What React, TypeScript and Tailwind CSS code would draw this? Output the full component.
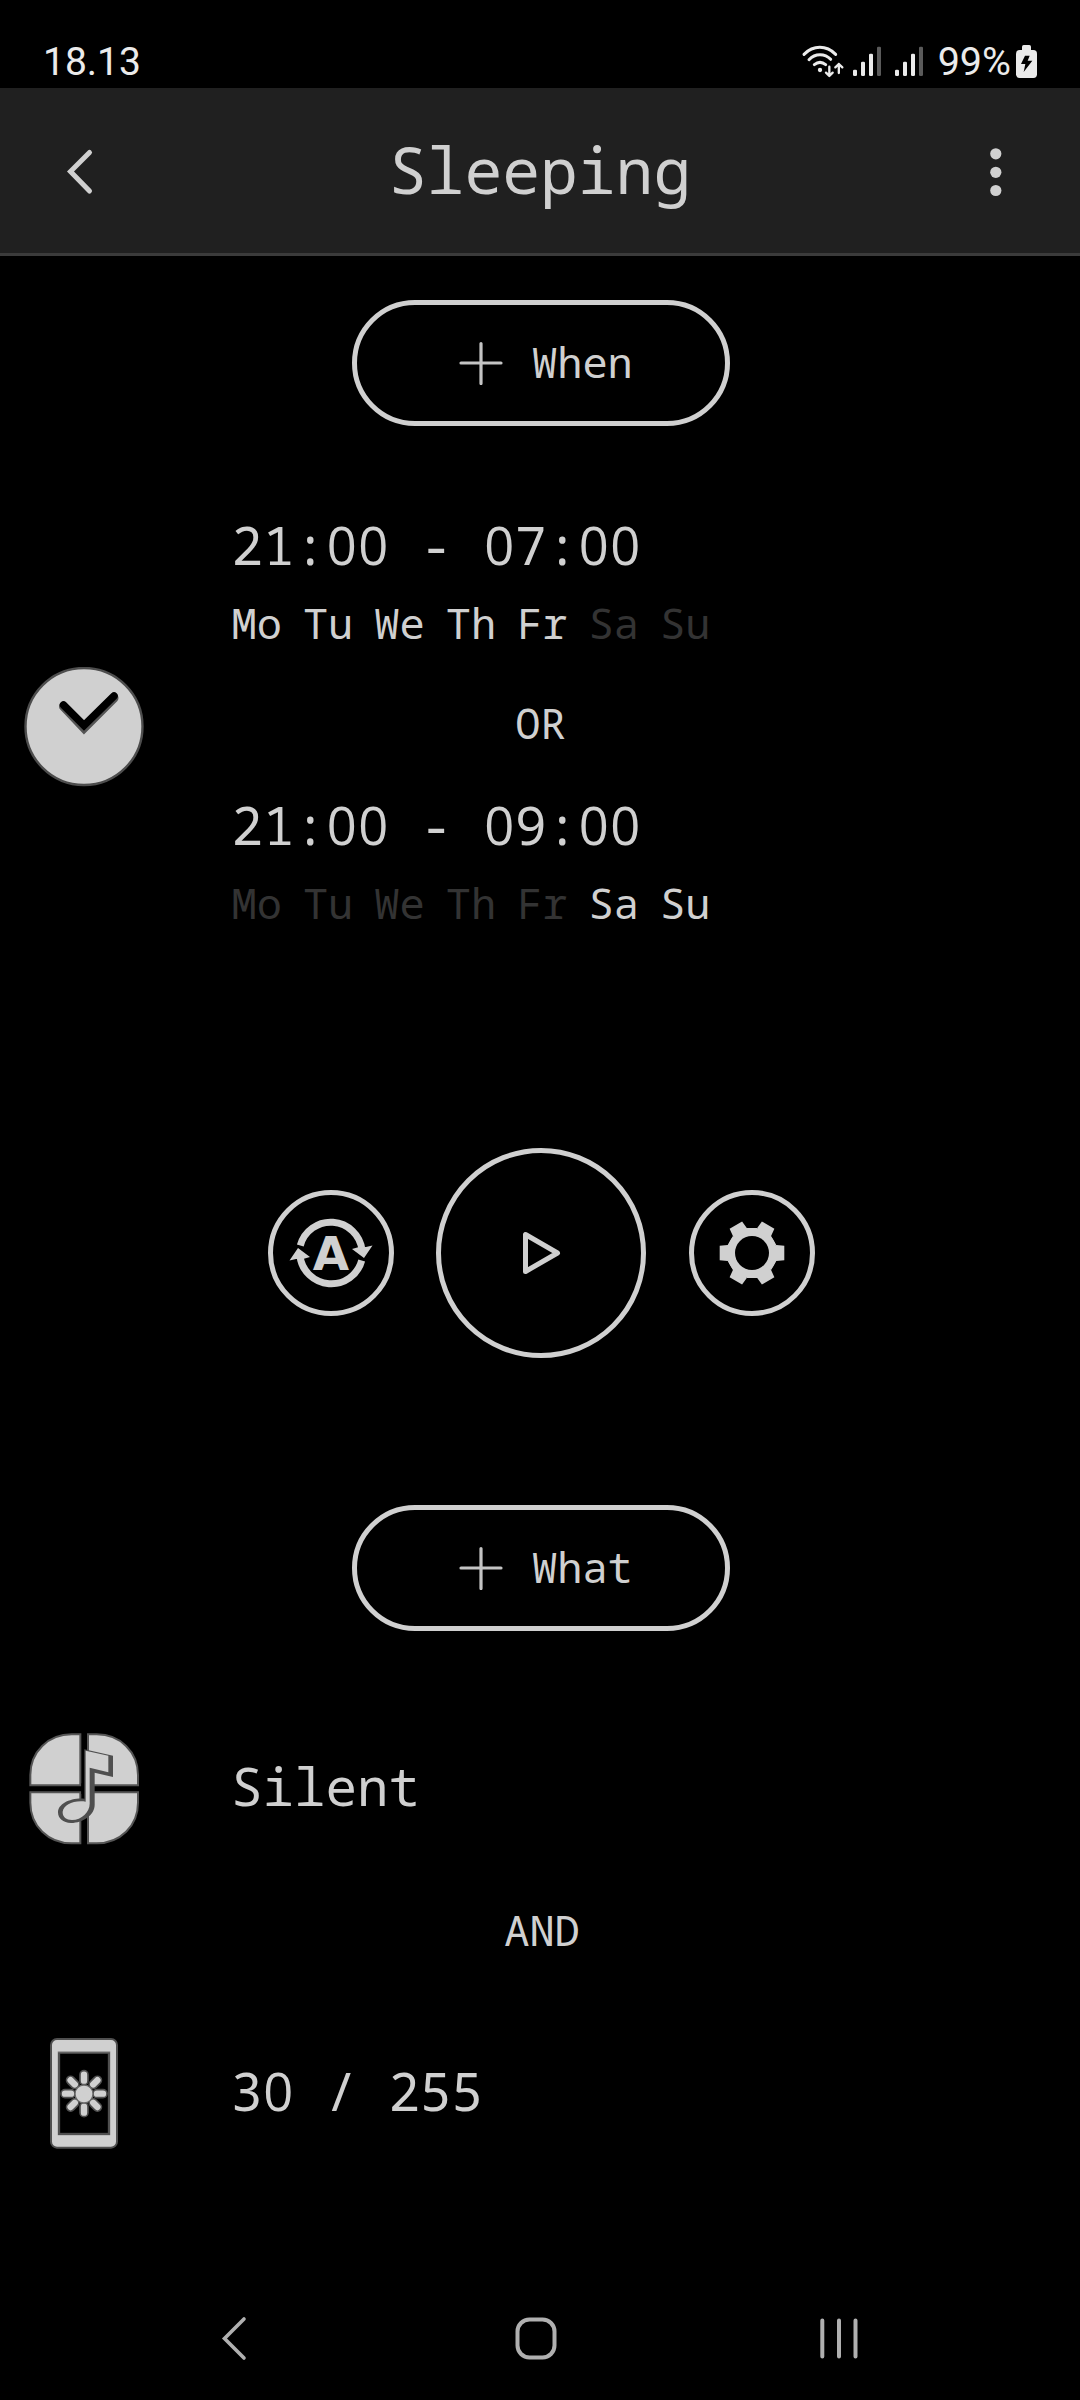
import React from 'react';

const DAYS = ['Mo', 'Tu', 'We', 'Th', 'Fr', 'Sa', 'Su'];

const schedules = [
  { time: '21:00 - 07:00', active: ['Mo', 'Tu', 'We', 'Th', 'Fr'] },
  { time: '21:00 - 09:00', active: ['Sa', 'Su'] },
];

// Zeros are set without the slash, on the same 0.6em advance
function Digits({ value }: { value: string }) {
  return (
    <>
      {value.split(/(0+)/).map((part, i) =>
        part.startsWith('0') ? (
          <span key={i} className="ml-[0.014em] -mr-[0.014em] font-['Open_Sans'] tracking-[0.028em]">
            {part}
          </span>
        ) : (
          part
        )
      )}
    </>
  );
}

function WifiIcon() {
  return (
    <svg className="h-[44px] w-[48px]" viewBox="60 60 144 132" fill="none" stroke="#ebebeb" strokeLinecap="round" strokeLinejoin="round">
      <path d="M72 103 Q93 82 119.500 82 Q146 82 167 103" strokeWidth="9" />
      <path d="M87 119 Q101 104 120 104 Q139 104 152 118" strokeWidth="9" />
      <path d="M103 134 Q120 120 137 134" strokeWidth="9" />
      <circle cx="120" cy="150" r="6.500" fill="#ebebeb" stroke="none" />
      <path d="M148 140 V167 M138 158 L148 168 L158 158" strokeWidth="7" />
      <path d="M176.500 159 V132 M166 142 L176.500 132 L187 142" strokeWidth="7" />
    </svg>
  );
}

function SignalIcon() {
  return (
    <svg className="h-[44px] w-[42px]" viewBox="204 60 126 132" fill="#ebebeb">
      <rect x="219" y="149" width="12" height="19" rx="4" />
      <rect x="243" y="125" width="12" height="43" rx="4" />
      <rect x="267" y="101" width="12" height="67" rx="4" />
      <rect x="291" y="80" width="12" height="88" rx="4" fill="#5a5a5a" />
    </svg>
  );
}

function BatteryIcon() {
  return (
    <svg className="ml-[3px] h-[44px] w-[26px]" viewBox="702 60 78 132" fill="#ebebeb">
      <rect x="726" y="75" width="27" height="24" rx="5" />
      <rect x="708" y="90" width="63" height="84" rx="11" />
      <path d="M735 107 H749 L743 122 H757 L731 156 L736 132 H723 Z" fill="#000" />
    </svg>
  );
}

function StatusBar() {
  return (
    <div className="flex h-[88px] items-center justify-between pl-[43px] pr-10 pt-[35px] font-['Roboto'] text-[39.5px] leading-[44px] text-[#ebebeb]">
      <span className="text-[39px]">18.13</span>
      <div className="flex items-center">
        <WifiIcon />
        <SignalIcon />
        <SignalIcon />
        <span className="ml-1.5">99%</span>
        <BatteryIcon />
      </div>
    </div>
  );
}

function Header() {
  return (
    <header className="flex h-[168px] items-center justify-between border-b-[3px] border-[#3b3b3b] bg-[#202020] pl-[59px] pr-[63px]">
      <svg className="h-[50px] w-[42px]" viewBox="0 0 42 50" fill="none" stroke="#d0d0d0" strokeWidth="5" strokeLinecap="round">
        <path d="M30.500 6.500 L11.500 25.500 L30.500 45" />
      </svg>
      <h1 className="pb-px pl-[4px] text-[63px] leading-[80px]">Sleeping</h1>
      <svg className="h-[60px] w-[42px]" viewBox="0 0 42 60" fill="#d0d0d0">
        <circle cx="20.800" cy="12.800" r="5.600" />
        <circle cx="20.800" cy="31.300" r="5.600" />
        <circle cx="20.800" cy="49.500" r="5.600" />
      </svg>
    </header>
  );
}

function AddButton({ label }: { label: string }) {
  return (
    <button className="ml-[352px] flex h-[126px] w-[378px] items-center rounded-full border-[5px] border-[#d0d0d0] pl-[102px]">
      <svg className="h-[44px] w-[44px]" viewBox="0 0 44 44" stroke="#c4c4c4" strokeWidth="3.200" strokeLinecap="round">
        <path d="M22 2.500 V42.500 M2 22 H42" />
      </svg>
      <span className="ml-[29px] pb-0.5 text-[42px] leading-[56px]">{label}</span>
    </button>
  );
}

function ClockIcon() {
  return (
    <svg className="ml-[24px] h-[120px] w-[120px]" viewBox="0 0 120 120" fill="none">
      <circle cx="60" cy="59.500" r="58.500" fill="#d0d0d0" stroke="#4d4d4d" strokeWidth="2.400" />
      <path d="M39.500 39.500 L60 61 L90 31" stroke="#555" strokeWidth="9" strokeLinecap="round" />
      <path d="M39.500 38 L60 58.500 L90 29" stroke="#000" strokeWidth="7.500" strokeLinecap="round" />
    </svg>
  );
}

function SoundIcon() {
  return (
    <svg className="ml-5 h-[130px] w-[130px]" viewBox="0 0 390 390" fill="#d0d0d0" stroke="#555" strokeWidth="6">
      <path d="M181 43 H155 C85 43 31 95 31 165 V196 H181 Z" />
      <path d="M204 43 H230 C300 43 354 95 354 165 V196 H204 Z" />
      <path d="M181 217 H31 V248 C31 318 85 370 155 370 H181 Z" />
      <path d="M204 217 H354 V248 C354 318 300 370 230 370 H204 Z" />
      {/* gap between the tiles under the note */}
      <rect x="184" y="190" width="17" height="32" fill="#000" stroke="none" />
      <path
        d="M193 88 L279 107 V171 L224 158 V255 C224 284 190 309 153 309 C129 309 114 295 114 277 C114 252 150 233 193 236 Z"
        fill="#4f4f4f"
        stroke="none"
      />
      <path
        d="M197 92 L265 107 V157 L209 143 V247 C211 275 186 299 156 300 C138 300 127 291 128 275 C131 255 160 240 197 245 Z"
        stroke="none"
      />
    </svg>
  );
}

const PETALS = [0, 45, 90, 135, 180, 225, 270, 315];

function BrightnessIcon() {
  return (
    <svg className="ml-[30px] h-[140px] w-[110px]" viewBox="0 0 330 420">
      <rect x="63" y="57" width="198" height="326" rx="18" fill="#d0d0d0" stroke="#4f4f4f" strokeWidth="6" />
      <rect x="87" y="98" width="150" height="244" fill="#000" stroke="#4f4f4f" strokeWidth="7" />
      <path d="M84 95 H240" stroke="#a0a0a0" strokeWidth="4" />
      {PETALS.map((a) => (
        <rect
          key={a}
          x="150"
          y="152"
          width="24"
          height="42"
          rx="12"
          fill="#d0d0d0"
          stroke="#4f4f4f"
          strokeWidth="5"
          transform={`rotate(${a} 162 221)`}
        />
      ))}
      <circle cx="162" cy="222" r="27" fill="#d0d0d0" stroke="#6a6a6a" strokeWidth="4" />
    </svg>
  );
}

function AutoIcon() {
  return (
    <svg className="h-[90px] w-[90px]" viewBox="-45 -45 90 90" fill="#d0d0d0">
      <g fill="none" stroke="#d0d0d0" strokeWidth="7">
        <path d="M-30.700 -7.500 A31.500 31.500 0 0 1 31 -3" />
        <path d="M30.700 7.500 A31.500 31.500 0 0 1 -31 3" />
      </g>
      <path d="M21 -4 L28 -6 H35 L41.500 -7.500 L33 5 Z" />
      <path d="M-21 4 L-28 6 H-35 L-41.500 7.500 L-33 -5 Z" />
      <text x="0" y="17" textAnchor="middle" className="font-['DejaVu_Sans'] text-[47px] font-bold">
        A
      </text>
    </svg>
  );
}

function PlayIcon() {
  return (
    <svg className="h-[64px] w-[64px]" viewBox="-32 -32 64 64" fill="none" stroke="#d0d0d0" strokeWidth="5" strokeLinejoin="round">
      <path d="M-15.500 -18.500 V18.500 L16.500 0 Z" />
    </svg>
  );
}

function GearIcon() {
  const teeth = [0, 60, 120, 180, 240, 300];
  return (
    <svg className="h-[90px] w-[90px]" viewBox="-45 -45 90 90">
      <circle r="21" fill="none" stroke="#d0d0d0" strokeWidth="8" />
      {teeth.map((a) => (
        <path
          key={a}
          d="M17 -9.800 L22.300 -6.700 L24.300 -8 L32.300 -7.200 V7.200 L24.300 8 L19.100 17 L12 12 Z"
          fill="#d0d0d0"
          transform={`rotate(${a})`}
        />
      ))}
      <circle r="17" fill="#000" />
    </svg>
  );
}

function NavBar() {
  return (
    <nav className="flex h-[110px] items-center pb-[15px]">
      <svg className="ml-[214px] h-[48px] w-[40px]" viewBox="0 0 40 48" fill="none" stroke="#b0b0b0" strokeWidth="3.600" strokeLinecap="round">
        <path d="M30 5 L10.500 24.500 L30 44" />
      </svg>
      <svg className="ml-[258px] h-[48px] w-[48px]" viewBox="0 0 48 48" fill="none" stroke="#b0b0b0" strokeWidth="4">
        <rect x="5.500" y="5.500" width="37" height="38" rx="12" />
      </svg>
      <svg className="ml-[255px] h-[48px] w-[48px]" viewBox="0 0 48 48" stroke="#b0b0b0" strokeWidth="4" strokeLinecap="round">
        <path d="M7.300 6.500 V42.500 M24 6.500 V42.500 M40.500 6.500 V42.500" />
      </svg>
    </nav>
  );
}

export default function App() {
  return (
    <div className="flex h-[2400px] w-[1080px] flex-col overflow-hidden bg-black font-['Noto_Sans_Mono','DejaVu_Sans_Mono',monospace] text-[#d0d0d0]">
      <StatusBar />
      <Header />

      <main className="flex-1 pt-11">
        <AddButton label="When" />

        <section className="mt-[78px] flex items-center">
          <ClockIcon />
          <div className="ml-[87.5px] pb-[9px] pt-px">
            {schedules.map((item, i) => (
              <React.Fragment key={item.time}>
                {i > 0 && <p className="w-[618px] text-center text-[42px] leading-[124px]">OR</p>}
                <p className="whitespace-pre text-[52.5px] leading-[80px]">
                  <Digits value={item.time} />
                </p>
                <div className="flex gap-[21px] text-[42px] leading-[76px]">
                  {DAYS.map((day) => (
                    <span key={day} className={item.active.includes(day) ? 'text-[#d0d0d0]' : 'text-[#333333]'}>
                      {day}
                    </span>
                  ))}
                </div>
              </React.Fragment>
            ))}
          </div>
        </section>

        <div className="ml-[268px] mt-[198px] flex items-center gap-[42px]">
          <button className="flex h-[126px] w-[126px] items-center justify-center rounded-full border-[5px] border-[#d0d0d0]">
            <AutoIcon />
          </button>
          <button className="flex h-[210px] w-[210px] items-center justify-center rounded-full border-[5px] border-[#d0d0d0]">
            <PlayIcon />
          </button>
          <button className="ml-px flex h-[126px] w-[126px] items-center justify-center rounded-full border-[5px] border-[#d0d0d0]">
            <GearIcon />
          </button>
        </div>

        <div className="mt-[147px]">
          <AddButton label="What" />
        </div>

        <section className="mt-[89px]">
          <div className="flex items-center">
            <SoundIcon />
            <p className="ml-[81px] pt-0.5 text-[52.5px] leading-[80px]">Silent</p>
          </div>
          <p className="pb-[11px] pl-[4px] text-center text-[42px] leading-[159px]">AND</p>
          <div className="flex items-center">
            <BrightnessIcon />
            <p className="ml-[91px] pt-px text-[52.5px] leading-[80px]">
              <Digits value="30 / 255" />
            </p>
          </div>
        </section>
      </main>

      <NavBar />
    </div>
  );
}
